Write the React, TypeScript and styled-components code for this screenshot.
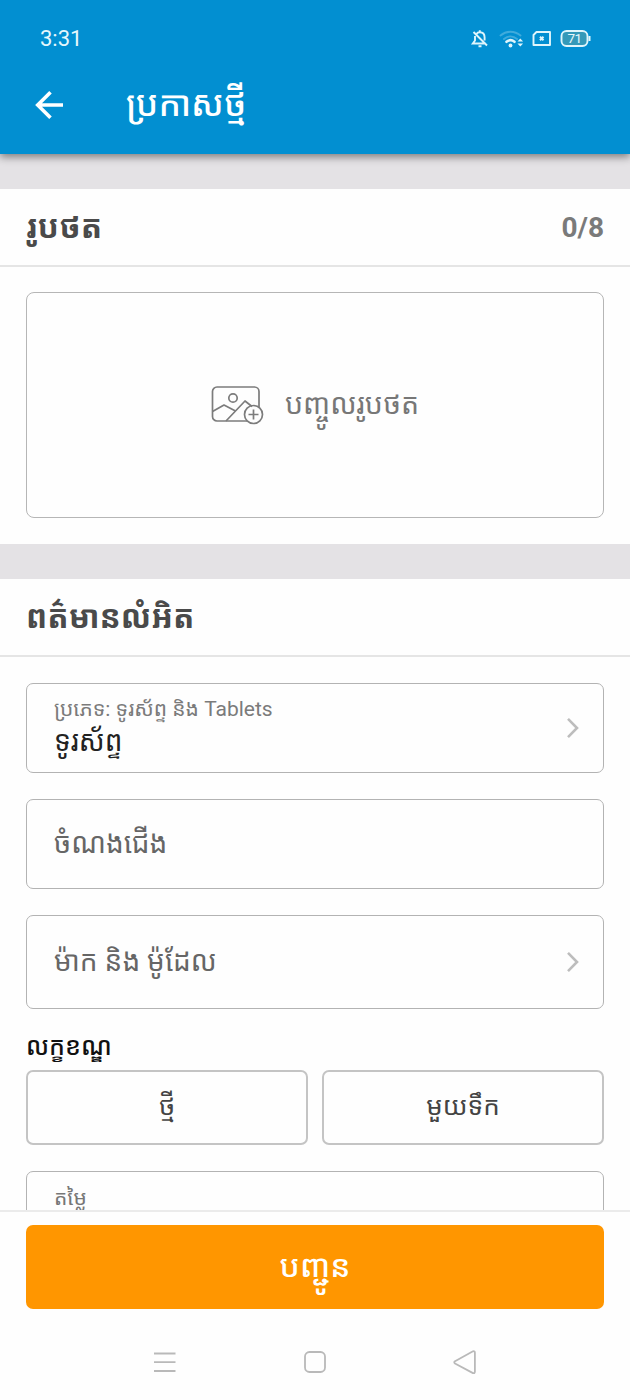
import React from "react";
import styled, { createGlobalStyle } from "styled-components";

const Global = createGlobalStyle`
  * { box-sizing: border-box; }
  body { margin: 0; background: #fefefe; font-family: Roboto, "Noto Sans Khmer", "Noto Sans", sans-serif; }
`;

const Screen = styled.div`
  width: 630px;
  height: 1400px;
  display: flex;
  flex-direction: column;
  overflow: hidden;
  background: #fefefe;
`;

const Header = styled.header`
  flex: none;
  height: 154px;
  background: #028fd1;
  color: #fff;
  position: relative;
  box-shadow: 0 3px 8px rgba(0, 0, 0, 0.45);
`;

const StatusBar = styled.div`
  height: 56px;
  padding: 21px 39px 0 40px;
  display: flex;
  justify-content: space-between;
  align-items: center;
`;

const Clock = styled.span`
  font-size: 22px;
  line-height: 36px;
  color: #e6f7fc;
`;

const StatusIcons = styled.svg`
  display: block;
  width: 122px;
  height: 24px;
`;

const TitleBar = styled.div`
  height: 96px;
  padding-left: 33px;
  display: flex;
  align-items: center;
  gap: 61px;
`;

const Glyph = styled.svg<{ $w: number; $h: number }>`
  display: block;
  flex: none;
  width: ${(p) => p.$w}px;
  height: ${(p) => p.$h}px;
`;

const Text = styled.span<{ $size: number; $color: string; $weight?: number; $line?: number }>`
  display: block;
  white-space: nowrap;
  font-size: ${(p) => p.$size}px;
  line-height: ${(p) => p.$line ?? 40}px;
  color: ${(p) => p.$color};
  font-weight: ${(p) => p.$weight ?? 400};
`;

const Content = styled.main`
  flex: none;
  height: 1057px;
  overflow: hidden;
`;

const Band = styled.div`
  height: 35px;
  background: #e4e2e5;
`;

const SectionHead = styled.div`
  height: 78px;
  padding: 2px 26px 0;
  border-bottom: 2px solid #e5e5e5;
  display: flex;
  align-items: center;
  justify-content: space-between;
`;

const PhotoArea = styled.div`
  padding: 25px 26px 26px;
`;

const Upload = styled.button`
  width: 100%;
  height: 226px;
  border: 1px solid #b6b6b6;
  border-radius: 8px;
  background: transparent;
  font: inherit;
  display: flex;
  align-items: center;
  justify-content: center;
  gap: 20px;
`;

const Form = styled.div`
  padding: 26px 26px 0;
  display: flex;
  flex-direction: column;
`;

const Field = styled.div<{ $h: number; $lift?: number }>`
  flex: none;
  height: ${(p) => p.$h}px;
  margin-bottom: 26px;
  padding: 0 21px ${(p) => p.$lift ?? 0}px 27px;
  border: 1px solid #b3b3b3;
  border-radius: 7px;
  display: flex;
  align-items: center;
  justify-content: space-between;
`;

const Stack = styled.div`
  display: flex;
  flex-direction: column;
  padding-bottom: 5px;
`;

const GroupLabel = styled.div`
  height: 35px;
  margin-top: -6px;
  margin-bottom: 6px;
`;

const Choices = styled.div`
  display: grid;
  grid-template-columns: 1fr 1fr;
  gap: 14px;
  margin-bottom: 26px;
`;

const Choice = styled.button`
  height: 75px;
  border: 2px solid #c4c4c4;
  border-radius: 7px;
  background: transparent;
  padding: 0 0 4px;
  font: inherit;
  display: flex;
  align-items: center;
  justify-content: center;
`;

const Footer = styled.footer`
  flex: none;
  height: 112px;
  margin-top: -1px;
  padding: 13px 26px 0;
  border-top: 2px solid #ebebeb;
  background: #fefefe;
`;

const Submit = styled.button`
  width: 100%;
  height: 84px;
  border: 0;
  border-radius: 7px;
  background: #ff9600;
  font: inherit;
  display: flex;
  align-items: center;
  justify-content: center;
`;

const NavBar = styled.nav`
  flex: 1;
  padding: 28px 153px 0;
  display: flex;
  align-items: flex-start;
  justify-content: space-between;
`;

const Chevron = () => (
  <Glyph $w={18} $h={24} viewBox="0 0 18 24" fill="none" stroke="#bdbdbd" strokeWidth="2.600">
    <path d="M4 2.800l9 9.200-9 9.200" />
  </Glyph>
);

const PhotoIcon = () => (
  <Glyph $w={54} $h={40} viewBox="0 0 54 40" fill="none" stroke="#7c7c7c" strokeWidth="1.7" strokeLinejoin="round">
    <path d="M36 36H6a4.500 4.500 0 0 1-4.500-4.500V6.500A4.500 4.500 0 0 1 6 2h37.500A4.500 4.500 0 0 1 48 6.500V22" />
    <circle cx="22" cy="13" r="4.200" />
    <path d="M1.500 26.500L13 20l11.500 6" />
    <path d="M15 36l19-20 7 5.500" />
    <circle cx="42.500" cy="29.500" r="9" />
    <path d="M42.500 24.500v10M37.500 29.500h10" />
  </Glyph>
);

const Status = () => (
  <StatusIcons viewBox="0 0 122 24" fill="none" stroke="#dff5fb" strokeWidth="1.900">
    <path d="M7.500 7C8.200 5.800 9.200 5.200 10.800 5.200c3 0 4.800 2.200 4.800 5.300v3M6 9v4.500l-2.200 3h13M4.500 5l13.500 13.500M10.800 3.200v2M9.500 19.300h3" />
    <g strokeLinecap="round">
      <path d="M31.500 8.500c6-5 14-5 20 0M35 12c4-3.500 9-3.500 13 0" stroke="#3fabdc" />
      <path d="M37.500 14.800c2.500-2 5.500-2 8 0" strokeWidth="2.600" />
    </g>
    <circle cx="41.500" cy="18.500" r="1.900" fill="#dff5fb" stroke="none" />
    <path d="M48.500 14.500l2.800-3 2.800 3zM48.500 16.500l2.800 3 2.800-3z" fill="#dff5fb" stroke="none" />
    <path d="M67.500 5H81v13H64.500V8z" strokeLinejoin="round" />
    <path d="M71 9.800l3.500 3.500M74.500 9.800L71 13.300" strokeWidth="2" />
    <rect x="92.500" y="4" width="26" height="15" rx="5" fill="#3499b9" />
    <path d="M120.500 9v5" strokeWidth="2" />
    <text x="105.500" y="16.300" textAnchor="middle" fontSize="13.500" letterSpacing="-0.500" fill="#e6f7fc" stroke="none">71</text>
  </StatusIcons>
);

export default function App() {
  return (
    <>
      <Global />
      <Screen>
        <Header>
          <StatusBar>
            <Clock>3:31</Clock>
            <Status />
          </StatusBar>
          <TitleBar>
            <Glyph $w={32} $h={32} viewBox="0 0 32 32" fill="none" stroke="#fff" strokeWidth="3.600">
              <path d="M30 17H4.500M17.500 4.200L4.700 17l12.800 12.800" />
            </Glyph>
            <Text $size={34.8} $color="#fff" $weight={500}>ប្រកាសថ្មី</Text>
          </TitleBar>
        </Header>
        <Content>
          <Band />
          <SectionHead>
            <Text $size={31.5} $color="#4a4a4a" $weight={700}>រូបថត</Text>
            <Text $size={28} $color="#7a7a7a" $weight={700}>0/8</Text>
          </SectionHead>
          <PhotoArea>
            <Upload>
              <PhotoIcon />
              <Text $size={28.5} $color="#777">បញ្ចូលរូបថត</Text>
            </Upload>
          </PhotoArea>
          <Band />
          <SectionHead>
            <Text $size={31.5} $color="#4a4a4a" $weight={700}>ពត៌មានលំអិត</Text>
          </SectionHead>
          <Form>
            <Field $h={90}>
              <Stack>
                <Text $size={21} $color="#7b7b7b" $line={32}>ប្រភេទ: ទូរស័ព្ទ និង Tablets</Text>
                <Text $size={28} $color="#222" $line={34}>ទូរស័ព្ទ</Text>
              </Stack>
              <Chevron />
            </Field>
            <Field $h={90}>
              <Text $size={28} $color="#666">ចំណងជើង</Text>
            </Field>
            <Field $h={94} $lift={1}>
              <Text $size={28} $color="#666">ម៉ាក និង ម៉ូដែល</Text>
              <Chevron />
            </Field>
            <GroupLabel>
              <Text $size={24.6} $color="#111" $line={35} $weight={500}>លក្ខខណ្ឌ</Text>
            </GroupLabel>
            <Choices>
              <Choice><Text $size={26} $color="#444">ថ្មី</Text></Choice>
              <Choice><Text $size={26} $color="#444">មួយទឹក</Text></Choice>
            </Choices>
            <Field $h={92}>
              <Stack>
                <Text $size={21} $color="#777" $line={32}>តម្លៃ</Text>
                <Text $size={28} $color="#222" $line={34}>&nbsp;</Text>
              </Stack>
            </Field>
          </Form>
        </Content>
        <Footer>
          <Submit><Text $size={31.3} $color="#fff" $weight={500}>បញ្ជូន</Text></Submit>
        </Footer>
        <NavBar>
          <Glyph $w={24} $h={24} viewBox="0 0 24 24" stroke="#b9b9b9" strokeWidth="1.800">
            <path d="M1 3.500h21.500M1 12.200h21.500M1 21h21.500" />
          </Glyph>
          <Glyph $w={24} $h={24} viewBox="0 0 24 24" fill="none" stroke="#b9b9b9" strokeWidth="1.800">
            <rect x="2" y="2" width="20" height="20" rx="4.500" />
          </Glyph>
          <Glyph $w={24} $h={24} viewBox="0 0 24 24" fill="none" stroke="#b9b9b9" strokeWidth="1.800" strokeLinejoin="round">
            <path d="M2 11.200L20 1.300q1.900-.5 1.900 1.500v18.800q0 2-1.900 1.500L2 13.500q-1.500-1.200 0-2.300z" />
          </Glyph>
        </NavBar>
      </Screen>
    </>
  );
}
